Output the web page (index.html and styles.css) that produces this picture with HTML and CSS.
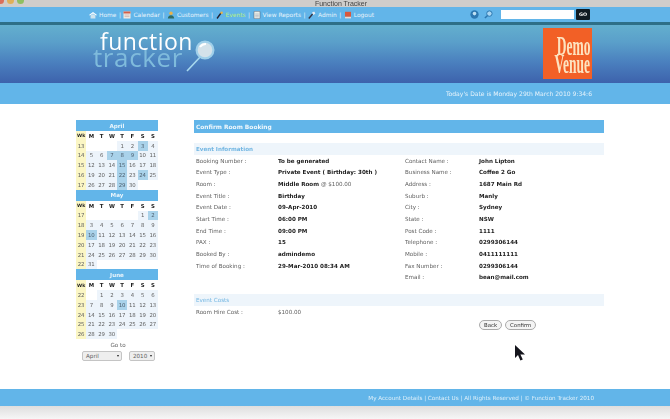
FILE: index.html
```html
<!DOCTYPE html>
<html lang="en">
<head>
<meta charset="utf-8">
<title>Function Tracker</title>
<link rel="stylesheet" href="styles.css">
</head>
<body>
<div class="page">
  <div class="titlebar">
    <div class="lights"><i class="l-red"></i><i class="l-yellow"></i><i class="l-green"></i></div>
    <span class="win-title">Function Tracker</span>
  </div>
  <nav class="nav">
    <div class="menu">
      <svg class="ico" viewBox="0 0 8 8"><path d="M0 4 4 1l4 3-1 .6L4 2.4 1 4.6z" fill="#fff"/><path d="M1.6 4.6 4 3l2.4 1.6V7.5H1.6z" fill="#cfe4ee"/></svg><a>Home</a><b>|</b>
      <svg class="ico" viewBox="0 0 8 8"><rect x=".5" y=".5" width="7" height="7" fill="#f3ece4"/><rect x=".5" y=".5" width="7" height="2" fill="#d2604a"/><path d="M1.5 4h5M1.5 5.6h5" stroke="#b99" stroke-width=".6"/></svg><a>Calendar</a><b>|</b>
      <svg class="ico" viewBox="0 0 8 8"><circle cx="4" cy="2.2" r="1.7" fill="#e8b34a"/><path d="M.8 7.5C1 5 2.5 4.2 4 4.2S7 5 7.2 7.5z" fill="#2f6b63"/></svg><a>Customers</a><b>|</b>
      <svg class="ico" viewBox="0 0 8 8"><path d="M1 7.5 5 2" stroke="#223" stroke-width="1.3"/><circle cx="5.6" cy="1.8" r="1.3" fill="#e8b34a"/></svg><a class="active">Events</a><b>|</b>
      <svg class="ico" viewBox="0 0 8 8"><rect x="1" y=".3" width="6" height="7.4" rx=".6" fill="#e9efe9" stroke="#556" stroke-width=".5"/><path d="M2.2 3h3.6M2.2 4.4h3.6M2.2 5.8h3.6" stroke="#99a" stroke-width=".5"/></svg><a>View Reports</a><b>|</b>
      <svg class="ico" viewBox="0 0 8 8"><path d="M.8 7.5 4.6 3" stroke="#334" stroke-width="1.4"/><path d="M4 1.6 6.2.6 7.4 2.6 5.4 4z" fill="#e6ecf2"/></svg><a>Admin</a><b>|</b>
      <svg class="ico" viewBox="0 0 8 8"><rect x="1" y=".8" width="6" height="5" fill="#d9583c"/><rect x="1" y="5.8" width="6" height="1.6" fill="#e9dcd2"/></svg><a>Logout</a>
    </div>
    <div class="tools">
      <svg class="tool" viewBox="0 0 10 10"><circle cx="5" cy="5" r="4.6" fill="#2c77b0"/><circle cx="5" cy="4" r="2" fill="#bfe0f3"/></svg>
      <svg class="tool" viewBox="0 0 10 10"><circle cx="6" cy="4" r="3" fill="#a9d6f2" stroke="#2c77b0" stroke-width="1.1"/><path d="M4 6 1 9" stroke="#2c77b0" stroke-width="1.6"/></svg>
      <input class="search" type="text" aria-label="Search">
      <span class="go">GO</span>
    </div>
  </nav>
  <header class="banner">
    <div class="logo">
      <span class="logo-a">function</span>
      <span class="logo-b">tracker</span>
      <svg class="lens" viewBox="0 0 30 36"><path d="M2 34 17 18" stroke="#a8d9ee" stroke-width="1.6"/><circle cx="20" cy="13" r="8.4" fill="#d4e2ea" stroke="#a0d0ea" stroke-width="2.2"/><path d="M15 10a7 7 0 0 1 6-3" stroke="#fff" stroke-width="2" fill="none"/></svg>
    </div>
    <div class="venue"><span>Demo</span><span>Venue</span></div>
  </header>
  <div class="datebar">Today's Date is Monday 29th March 2010 9:34:6</div>
  <main class="content">
    <aside class="side">
      <div class="cal-head">April</div>
      <div class="cal">
        <b class="wh">Wk</b><b>M</b><b>T</b><b>W</b><b>T</b><b>F</b><b>S</b><b>S</b>
        <u>13</u><s></s><s></s><s></s><i>1</i><i>2</i><i class="on">3</i><i>4</i>
        <u>14</u><i>5</i><i>6</i><i class="on">7</i><i class="on">8</i><i class="on">9</i><i>10</i><i>11</i>
        <u>15</u><i>12</i><i>13</i><i>14</i><i class="on">15</i><i>16</i><i>17</i><i>18</i>
        <u>16</u><i>19</i><i>20</i><i>21</i><i class="on">22</i><i>23</i><i class="on">24</i><i>25</i>
        <u>17</u><i>26</i><i>27</i><i>28</i><i class="on">29</i><i>30</i><s></s><s></s>
      </div>
      <div class="cal-head">May</div>
      <div class="cal">
        <b class="wh">Wk</b><b>M</b><b>T</b><b>W</b><b>T</b><b>F</b><b>S</b><b>S</b>
        <u>17</u><s></s><s></s><s></s><s></s><s></s><i>1</i><i class="on">2</i>
        <u>18</u><i>3</i><i>4</i><i>5</i><i>6</i><i>7</i><i>8</i><i>9</i>
        <u>19</u><i class="on">10</i><i>11</i><i>12</i><i>13</i><i>14</i><i>15</i><i>16</i>
        <u>20</u><i>17</i><i>18</i><i>19</i><i>20</i><i>21</i><i>22</i><i>23</i>
        <u>21</u><i>24</i><i>25</i><i>26</i><i>27</i><i>28</i><i>29</i><i>30</i>
        <u>22</u><i>31</i><s></s><s></s><s></s><s></s><s></s><s></s>
      </div>
      <div class="cal-head">June</div>
      <div class="cal">
        <b class="wh">Wk</b><b>M</b><b>T</b><b>W</b><b>T</b><b>F</b><b>S</b><b>S</b>
        <u>22</u><s></s><i>1</i><i>2</i><i>3</i><i>4</i><i>5</i><i>6</i>
        <u>23</u><i>7</i><i>8</i><i>9</i><i class="on">10</i><i>11</i><i>12</i><i>13</i>
        <u>24</u><i>14</i><i>15</i><i>16</i><i>17</i><i>18</i><i>19</i><i>20</i>
        <u>25</u><i>21</i><i>22</i><i>23</i><i>24</i><i>25</i><i>26</i><i>27</i>
        <u>26</u><i>28</i><i>29</i><i>30</i><s></s><s></s><s></s><s></s>
      </div>
      <div class="goto">Go to</div>
      <div class="selects"><span class="sel sel-m">April</span><span class="sel sel-y">2010</span></div>
    </aside>
    <section class="panel">
      <h1 class="panel-title">Confirm Room Booking</h1>
      <h2 class="sec sec-first">Event Information</h2>
      <div class="cols">
        <dl class="list">
          <dt>Booking Number :</dt><dd>To be generated</dd>
          <dt>Event Type :</dt><dd>Private Event ( Birthday: 30th )</dd>
          <dt>Room :</dt><dd>Middle Room <em>@ $100.00</em></dd>
          <dt>Event Title :</dt><dd>Birthday</dd>
          <dt>Event Date :</dt><dd>09-Apr-2010</dd>
          <dt>Start Time :</dt><dd>06:00 PM</dd>
          <dt>End Time :</dt><dd>09:00 PM</dd>
          <dt>PAX :</dt><dd>15</dd>
          <dt>Booked By :</dt><dd>admindemo</dd>
          <dt>Time of Booking :</dt><dd>29-Mar-2010 08:34 AM</dd>
        </dl>
        <dl class="list">
          <dt>Contact Name :</dt><dd>John Lipton</dd>
          <dt>Business Name :</dt><dd>Coffee 2 Go</dd>
          <dt>Address :</dt><dd>1687 Main Rd</dd>
          <dt>Suburb :</dt><dd>Manly</dd>
          <dt>City :</dt><dd>Sydney</dd>
          <dt>State :</dt><dd>NSW</dd>
          <dt>Post Code :</dt><dd>1111</dd>
          <dt>Telephone :</dt><dd>0299306144</dd>
          <dt>Mobile :</dt><dd>0411111111</dd>
          <dt>Fax Number :</dt><dd>0299306144</dd>
          <dt>Email :</dt><dd>bean@mail.com</dd>
        </dl>
      </div>
      <h2 class="sec sec-costs">Event Costs</h2>
      <dl class="list cost"><dt>Room Hire Cost :</dt><dd><em>$100.00</em></dd></dl>
      <div class="actions"><span class="btn">Back</span><span class="btn">Confirm</span></div>
    </section>
  </main>
  <footer class="footer">My Account Details | Contact Us | All Rights Reserved | © Function Tracker 2010</footer>
  <div class="bottom"></div>
  <svg class="cursor" viewBox="0 0 11 16"><path d="M1 0v13l3-3 2.4 5.4 2.4-1L6.4 9.6H11z" fill="#15151c"/></svg>
</div>
</body>
</html>
```
FILE: styles.css
```css
* { box-sizing: border-box; }
html, body { margin: 0; padding: 0; background: #fff; }
.page {
  position: relative;
  width: 670px;
  height: 419px;
  overflow: hidden;
  display: flex;
  flex-direction: column;
  font-family: "DejaVu Sans", sans-serif;
  font-size: 5.6px;
  color: #606060;
  filter: blur(0.6px);
}
.titlebar {
  height: 7px;
  flex: none;
  background: #cfcdcb;
  display: flex;
  justify-content: center;
  align-items: flex-end;
  position: relative;
}
.lights { position: absolute; left: -3px; top: -3px; display: flex; gap: 3px; }
.lights i { width: 7px; height: 7px; border-radius: 50%; }
.l-red { background: #d9705c; }
.l-yellow { background: #dfb05a; }
.l-green { background: #8fbf62; }
.win-title { font-family: "Liberation Sans", sans-serif; font-size: 7px; line-height: 7px; color: #444; margin-left: 12px; }
.nav {
  height: 15px;
  flex: none;
  background: #62b5e9;
  padding-left: 89px;
  display: flex;
  align-items: center;
  color: #e8f4fb;
  font-size: 5.9px;
}
.menu { display: flex; align-items: center; width: 380px; }
.menu a { margin-left: 2px; white-space: nowrap; }
.menu b { font-weight: 400; margin: 0 2.5px; }
.menu .active { color: #b7ee7c; }
.ico { width: 8px; height: 8px; flex: none; }
.tools { display: flex; align-items: center; margin-left: 1px; }
.tool { width: 9px; height: 9px; margin-right: 5px; }
.search { width: 73px; height: 9px; border: 0; padding: 0; background: #fff; margin-left: 3px; }
.go {
  width: 14px; height: 11px; margin-left: 2px; background: #0f1a22; color: #fff;
  font-size: 4.8px; font-weight: 700; display: flex; align-items: center; justify-content: center; border-radius: 1px;
}
.banner {
  height: 61px;
  flex: none;
  position: relative;
  border-top: 3px solid #2e6f87;
  background: linear-gradient(#63afce 0%, #5a9fca 30%, #4a7fbe 65%, #3d62ac 100%);
}
.logo { position: absolute; left: 93px; top: 8px; width: 125px; height: 40px; }
.logo-a, .logo-b { position: absolute; font-family: "Open Sans", sans-serif; line-height: 1; white-space: nowrap; }
.logo-a { left: 7px; top: -3px; font-size: 23px; font-weight: 400; letter-spacing: .5px; color: #fff; z-index: 1; }
.logo-b { left: 0; top: 11px; font-size: 26px; font-weight: 400; letter-spacing: .6px; color: #7fbbdc; z-index: 0; }
.lens { position: absolute; left: 92px; top: 4px; width: 30px; height: 36px; }
.venue {
  position: absolute;
  left: 543px; top: 3px;
  width: 49px; height: 51px;
  background: #f26026;
  display: flex;
  flex-direction: column;
  align-items: flex-end;
  justify-content: center;
  padding: 3px 2px 0 0;
  font-family: "Liberation Serif", serif;
  font-weight: 700;
  font-size: 27px;
  line-height: 18px;
  color: #fde3c0;
}
.venue span { display: block; transform: scaleX(.5); transform-origin: right center; }
.datebar {
  height: 21px;
  flex: none;
  background: #62b5e9;
  color: #e6f3fb;
  display: flex;
  align-items: center;
  justify-content: flex-end;
  padding-right: 78px;
  font-size: 6.05px;
}
.content { flex: 1; display: flex; gap: 36px; padding: 16px 0 0 76px; min-height: 0; }
.side { width: 82px; flex: none; }
.cal-head {
  height: 11px;
  background: #62b5e9;
  color: #e9f5fc;
  font-weight: 700;
  font-size: 5.6px;
  display: flex; align-items: center; justify-content: center;
}
.cal {
  display: grid;
  grid-template-columns: repeat(8, 1fr);
  grid-auto-rows: 9.8px;
  font-size: 5.4px;
}
.cal > * { display: flex; align-items: center; justify-content: center; font-style: normal; text-decoration: none; }
.cal b { color: #222; font-weight: 700; }
.cal u { background: #fbf6c4; color: #606060; }
.cal .wh { background: #fbf6c4; font-size: 4.6px; }
.cal i { background: #edf4fb; color: #606060; }
.cal .on { background: #a9d2ea; color: #4d6070; }
.goto { text-align: center; margin-top: 2px; line-height: 9px; padding-left: 2px; }
.selects { display: flex; gap: 7px; padding-left: 6px; margin-top: 1px; }
.sel {
  height: 10px;
  border: 1px solid #c4c4c4;
  border-radius: 2px;
  background: #eee;
  padding-left: 3px;
  line-height: 8px;
  position: relative;
}
.sel::after {
  content: "";
  position: absolute; right: 2px; top: 3px;
  border: 1.8px solid transparent;
  border-top: 2.4px solid #222;
}
.sel-m { width: 40px; }
.sel-y { width: 26px; }
.panel { width: 410px; flex: none; }
.panel-title {
  margin: 0;
  height: 13px;
  background: #62b5e9;
  color: #eef7fc;
  font-size: 5.9px;
  font-weight: 700;
  display: flex; align-items: center;
  padding-left: 2px;
}
.sec {
  margin: 0;
  height: 12px;
  background: #eef5fb;
  color: #72b6e2;
  font-size: 5.6px;
  font-weight: 400;
  display: flex; align-items: center;
  padding-left: 2px;
}
.sec-first { margin-top: 10px; font-weight: 700; }
.sec-costs { margin-top: 12px; }
.cols { display: flex; height: 127px; }
.cols .list:first-child { width: 209px; }
.list {
  margin: 0;
  display: grid;
  grid-template-columns: 82px 1fr;
  grid-auto-rows: 11.65px;
  padding-left: 2px;
  align-items: center;
  align-content: start;
  flex: none;
}
.cols .list:last-child { grid-template-columns: 74px 1fr; width: 199px; }
.list dt, .list dd { margin: 0; white-space: nowrap; }
.list dd { color: #222; font-weight: 700; }
.list em { font-style: normal; font-weight: 400; color: #606060; }
.actions { display: flex; gap: 3px; padding-left: 285px; margin-top: 2px; }
.btn {
  height: 10px;
  padding: 0 4px;
  border: 1px solid #aaa;
  border-radius: 5px;
  background: #f4f4f4;
  color: #333;
  font-size: 5.4px;
  line-height: 8px;
  display: flex; align-items: center;
}
.footer {
  height: 17px;
  flex: none;
  background: #62b5e9;
  color: #dff0fa;
  display: flex;
  align-items: center;
  justify-content: flex-end;
  padding-right: 76px;
  font-size: 5.65px;
}
.bottom { height: 13px; flex: none; background: linear-gradient(#dedede, #f6f6f6); }
.cursor { position: absolute; left: 514px; top: 345px; width: 11px; height: 16px; }
```
